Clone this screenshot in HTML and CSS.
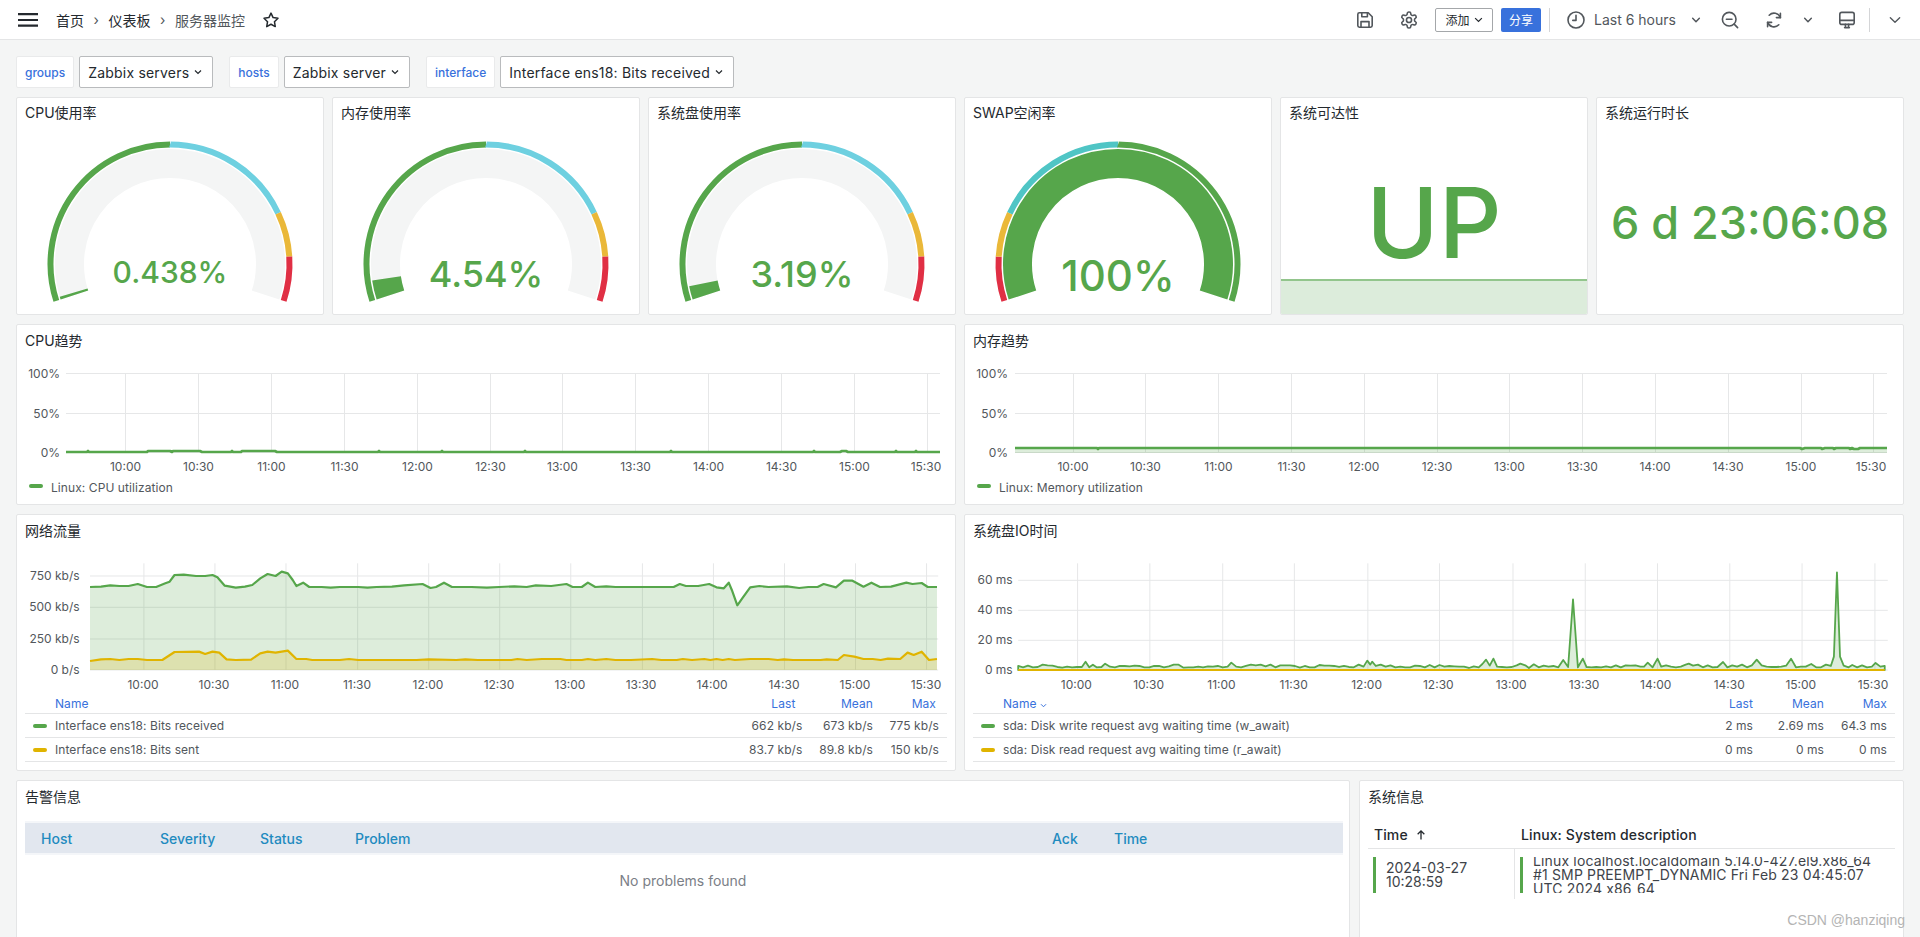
FILE: index.html
```html
<!DOCTYPE html>
<html lang="zh-CN">
<head>
<meta charset="utf-8">
<title>服务器监控</title>
<link rel="stylesheet" href="styles.css">
</head>
<body>
<header class="topbar">
  <svg class="menu" viewBox="0 0 20 14" aria-hidden="true"><path d="M0 1.2h20M0 7h20M0 12.6h20"/></svg>
  <nav class="crumbs">
    <span>首页</span><span class="sep">›</span><span>仪表板</span><span class="sep">›</span><span class="crumb-last">服务器监控</span>
  </nav>
  <svg class="ico star" viewBox="0 0 24 24"><path d="M12 2.8l2.8 6 6.5.9-4.7 4.6 1.1 6.5L12 17.7l-5.7 3.1 1.1-6.5-4.7-4.6 6.5-.9z"/></svg>
  <div class="actions">
    <svg class="ico" viewBox="2 2 20 20"><path d="M5 3h11l5 5v11a2 2 0 0 1-2 2H5a2 2 0 0 1-2-2V5a2 2 0 0 1 2-2z"/><path d="M8 3v5h7V3M7 21v-7h10v7"/></svg>
    <svg class="ico m28" viewBox="2 2 20 20"><circle cx="12" cy="12" r="3.2"/><path d="M12.22 2h-.44a2 2 0 0 0-2 2v.18a2 2 0 0 1-1 1.73l-.43.25a2 2 0 0 1-2 0l-.15-.08a2 2 0 0 0-2.73.73l-.22.38a2 2 0 0 0 .73 2.73l.15.1a2 2 0 0 1 1 1.72v.51a2 2 0 0 1-1 1.74l-.15.09a2 2 0 0 0-.73 2.73l.22.38a2 2 0 0 0 2.73.73l.15-.08a2 2 0 0 1 2 0l.43.25a2 2 0 0 1 1 1.73V20a2 2 0 0 0 2 2h.44a2 2 0 0 0 2-2v-.18a2 2 0 0 1 1-1.73l.43-.25a2 2 0 0 1 2 0l.15.08a2 2 0 0 0 2.73-.73l.22-.39a2 2 0 0 0-.73-2.73l-.15-.08a2 2 0 0 1-1-1.74v-.5a2 2 0 0 1 1-1.74l.15-.09a2 2 0 0 0 .73-2.73l-.22-.38a2 2 0 0 0-2.73-.73l-.15.08a2 2 0 0 1-2 0l-.43-.25a2 2 0 0 1-1-1.73V4a2 2 0 0 0-2-2z"/></svg>
    <button class="btn-add">添加<svg class="chev-s" viewBox="0 0 12 8"><path d="M1.5 1.5L6 6l4.5-4.5"/></svg></button>
    <button class="btn-share">分享</button>
    <span class="divider m8"></span>
    <svg class="ico m18" viewBox="2 2 20 20"><circle cx="12" cy="12" r="10"/><path d="M12 6v6.5H8"/></svg>
    <span class="range">Last 6 hours</span>
    <svg class="ico tiny m10" viewBox="0 0 24 24"><path d="M7 9.5l5 5 5-5"/></svg>
    <svg class="ico m18" viewBox="2 2 20 20"><circle cx="11" cy="11" r="8.5"/><path d="M7.5 11h7M21.5 21.5L17.2 17.2"/></svg>
    <svg class="ico m28" viewBox="2 2 20 20"><path d="M20 9A8.5 8.5 0 0 0 6 6M4 15a8.5 8.5 0 0 0 14 3"/><path d="M20 3.5V9h-5M4 20.5V15h5"/></svg>
    <svg class="ico tiny m18" viewBox="0 0 24 24"><path d="M7 9.5l5 5 5-5"/></svg>
    <svg class="ico m23" viewBox="2 2 20 20"><rect x="3" y="2.5" width="18" height="15" rx="2.5"/><path d="M3 12.5h18M9 21.5h6M10 17.5v4M14 17.5v4"/></svg>
    <span class="divider m14"></span>
    <svg class="ico m17" viewBox="0 0 24 24"><path d="M5 8.5l7 7 7-7"/></svg>
  </div>
</header>

<section class="vars">
  <span class="var-label">groups</span>
  <span class="var-select">Zabbix servers<svg class="chev-v" viewBox="0 0 8 6"><path d="M1 1.5L4 4.5l3-3"/></svg></span>
  <span class="var-label gap-l">hosts</span>
  <span class="var-select">Zabbix server<svg class="chev-v" viewBox="0 0 8 6"><path d="M1 1.5L4 4.5l3-3"/></svg></span>
  <span class="var-label gap-l">interface</span>
  <span class="var-select">Interface ens18: Bits received<svg class="chev-v" viewBox="0 0 8 6"><path d="M1 1.5L4 4.5l3-3"/></svg></span>
</section>

<main class="dash">
  <div class="row row-gauges">
    <article class="panel">
      <h2 class="title">CPU使用率</h2>
      <svg class="gauge" viewBox="0 0 306 184">
        <path class="track" pathLength="100" d="M57.42 165.05A100.5 100.5 0 1 1 248.58 165.05"/>
        <path class="val" pathLength="100" stroke-dasharray="0.7 1000" d="M57.42 165.05A100.5 100.5 0 1 1 248.58 165.05"/>
        <path class="th c-green" pathLength="100" stroke-dasharray="50 1000" d="M39.34 170.93A119.5 119.5 0 1 1 266.66 170.93"/>
        <path class="th c-blue" pathLength="100" stroke-dasharray="30 1000" stroke-dashoffset="-50" d="M39.34 170.93A119.5 119.5 0 1 1 266.66 170.93"/>
        <path class="th c-yellow" pathLength="100" stroke-dasharray="10 1000" stroke-dashoffset="-80" d="M39.34 170.93A119.5 119.5 0 1 1 266.66 170.93"/>
        <path class="th c-red" pathLength="100" stroke-dasharray="10 1000" stroke-dashoffset="-90" d="M39.34 170.93A119.5 119.5 0 1 1 266.66 170.93"/>
        <text class="gv s30" x="153" y="153">0.438%</text>
      </svg>
    </article>
    <article class="panel">
      <h2 class="title">内存使用率</h2>
      <svg class="gauge" viewBox="0 0 306 184">
        <path class="track" pathLength="100" d="M57.42 165.05A100.5 100.5 0 1 1 248.58 165.05"/>
        <path class="val" pathLength="100" stroke-dasharray="4.54 1000" d="M57.42 165.05A100.5 100.5 0 1 1 248.58 165.05"/>
        <path class="th c-green" pathLength="100" stroke-dasharray="50 1000" d="M39.34 170.93A119.5 119.5 0 1 1 266.66 170.93"/>
        <path class="th c-blue" pathLength="100" stroke-dasharray="30 1000" stroke-dashoffset="-50" d="M39.34 170.93A119.5 119.5 0 1 1 266.66 170.93"/>
        <path class="th c-yellow" pathLength="100" stroke-dasharray="10 1000" stroke-dashoffset="-80" d="M39.34 170.93A119.5 119.5 0 1 1 266.66 170.93"/>
        <path class="th c-red" pathLength="100" stroke-dasharray="10 1000" stroke-dashoffset="-90" d="M39.34 170.93A119.5 119.5 0 1 1 266.66 170.93"/>
        <text class="gv s36" x="153" y="157">4.54%</text>
      </svg>
    </article>
    <article class="panel">
      <h2 class="title">系统盘使用率</h2>
      <svg class="gauge" viewBox="0 0 306 184">
        <path class="track" pathLength="100" d="M57.42 165.05A100.5 100.5 0 1 1 248.58 165.05"/>
        <path class="val" pathLength="100" stroke-dasharray="3.19 1000" d="M57.42 165.05A100.5 100.5 0 1 1 248.58 165.05"/>
        <path class="th c-green" pathLength="100" stroke-dasharray="50 1000" d="M39.34 170.93A119.5 119.5 0 1 1 266.66 170.93"/>
        <path class="th c-blue" pathLength="100" stroke-dasharray="30 1000" stroke-dashoffset="-50" d="M39.34 170.93A119.5 119.5 0 1 1 266.66 170.93"/>
        <path class="th c-yellow" pathLength="100" stroke-dasharray="10 1000" stroke-dashoffset="-80" d="M39.34 170.93A119.5 119.5 0 1 1 266.66 170.93"/>
        <path class="th c-red" pathLength="100" stroke-dasharray="10 1000" stroke-dashoffset="-90" d="M39.34 170.93A119.5 119.5 0 1 1 266.66 170.93"/>
        <text class="gv s36" x="153" y="157">3.19%</text>
      </svg>
    </article>
    <article class="panel">
      <h2 class="title">SWAP空闲率</h2>
      <svg class="gauge" viewBox="0 0 306 184">
        <path class="val" pathLength="100" d="M57.42 165.05A100.5 100.5 0 1 1 248.58 165.05"/>
        <path class="th c-red" pathLength="100" stroke-dasharray="10 1000" d="M39.34 170.93A119.5 119.5 0 1 1 266.66 170.93"/>
        <path class="th c-yellow" pathLength="100" stroke-dasharray="10 1000" stroke-dashoffset="-10" d="M39.34 170.93A119.5 119.5 0 1 1 266.66 170.93"/>
        <path class="th c-teal" pathLength="100" stroke-dasharray="30 1000" stroke-dashoffset="-20" d="M39.34 170.93A119.5 119.5 0 1 1 266.66 170.93"/>
        <path class="th c-green" pathLength="100" stroke-dasharray="50 1000" stroke-dashoffset="-50" d="M39.34 170.93A119.5 119.5 0 1 1 266.66 170.93"/>
        <text class="gv s42" x="153" y="161">100%</text>
      </svg>
    </article>
    <article class="panel stat">
      <h2 class="title">系统可达性</h2>
      <div class="spark"></div>
      <div class="stat-body up">UP</div>
    </article>
    <article class="panel stat">
      <h2 class="title">系统运行时长</h2>
      <div class="stat-body uptime">6 d 23:06:08</div>
    </article>
  </div>

  <div class="row row-charts">
    <article class="panel">
      <h2 class="title">CPU趋势</h2>
      <svg class="plot h121" viewBox="0 0 938 121">
        <path class="gridl" d="M49 16.5H923M49 56.5H923M49 95.5H923M108.5 16V96M181.5 16V96M254.5 16V96M327.5 16V96M400.5 16V96M473.5 16V96M545.5 16V96M618.5 16V96M691.5 16V96M764.5 16V96M837.5 16V96M910.5 16V96"/>
        <path class="ln-green thick" d="M49 95H70L71 94L72 95H130L131 94H153L155 95L156 94H183L185 95H214L215 94L216 95H224L225 94H258L260 95H361L362 94L363 95H424L425 94L426 95H507L508 94L509 95H653L654 94L655 95H796L797 94L798 95H823L825 94H829L831 95H878L879 94L880 95H898L899 94L900 95H923"/>
        <text class="ay" x="43" y="20.5">100%</text><text class="ay" x="43" y="60.5">50%</text><text class="ay" x="43" y="99.5">0%</text>
        <text class="ax" x="108.5" y="114">10:00</text><text class="ax" x="181.5" y="114">10:30</text><text class="ax" x="254.5" y="114">11:00</text><text class="ax" x="327.5" y="114">11:30</text><text class="ax" x="400.5" y="114">12:00</text><text class="ax" x="473.5" y="114">12:30</text><text class="ax" x="545.5" y="114">13:00</text><text class="ax" x="618.5" y="114">13:30</text><text class="ax" x="691.5" y="114">14:00</text><text class="ax" x="764.5" y="114">14:30</text><text class="ax" x="837.5" y="114">15:00</text><text class="ax" x="909" y="114">15:30</text>
      </svg>
      <div class="legend-line"><i class="mark m-green"></i>Linux: CPU utilization</div>
    </article>
    <article class="panel">
      <h2 class="title">内存趋势</h2>
      <svg class="plot h121" viewBox="0 0 938 121">
        <path class="gridl" d="M50 16.5H922M50 56.5H922M50 95.5H922M108.5 16V96M180.5 16V96M253.5 16V96M326.5 16V96M399.5 16V96M472.5 16V96M544.5 16V96M617.5 16V96M690.5 16V96M763.5 16V96M836.5 16V96M908.5 16V96"/>
        <rect class="fill-green" x="50" y="91" width="872" height="5"/>
        <path class="ln-green thick" d="M50 91H132L133 92L134 91H835L837 92L840 91H856L857 92L860 91H868L869 92L871 91H884L885 92L887 91L889 92H893L895 91H922"/>
        <text class="ay" x="43" y="20.5">100%</text><text class="ay" x="43" y="60.5">50%</text><text class="ay" x="43" y="99.5">0%</text>
        <text class="ax" x="108" y="114">10:00</text><text class="ax" x="180.5" y="114">10:30</text><text class="ax" x="253.5" y="114">11:00</text><text class="ax" x="326.5" y="114">11:30</text><text class="ax" x="399" y="114">12:00</text><text class="ax" x="472" y="114">12:30</text><text class="ax" x="544.5" y="114">13:00</text><text class="ax" x="617.5" y="114">13:30</text><text class="ax" x="690" y="114">14:00</text><text class="ax" x="763" y="114">14:30</text><text class="ax" x="836" y="114">15:00</text><text class="ax" x="906" y="114">15:30</text>
      </svg>
      <div class="legend-line"><i class="mark m-green"></i>Linux: Memory utilization</div>
    </article>
  </div>

  <div class="row row-charts-b">
    <article class="panel">
      <h2 class="title">网络流量</h2>
      <svg class="plot h146" viewBox="0 0 938 146">
        <g transform="matrix(.6124 0 0 .3333 -17 -37)">
          <path class="gridl ns" d="M147 198H1532M147 292H1532M147 387H1532M147 480H1532M235 160V480M351 160V480M467 160V480M584 160V480M700 160V480M816 160V480M932 160V480M1049 160V480M1165 160V480M1281 160V480M1397 160V480M1513 160V480"/>
          <path class="fill-green" d="M147 231L165 230 180 226 195 228 210 228 225 222 240 231 255 231 270 220 277 215 285 195 300 194 320 198 335 198 347 195 355 202 367 227 385 233 400 230 412 225 425 205 437 192 450 198 460 185 470 190 478 210 484 228 495 218 505 231 525 231 540 233 555 231 585 231 600 233 615 231 640 230 660 226 690 222 703 234 712 231 725 218 738 231 770 231 795 233 815 231 840 229 860 231 875 226 900 228 925 222 935 231 950 231 960 218 972 231 990 229 1005 231 1100 231 1110 222 1120 228 1140 228 1158 222 1170 232 1182 235 1190 218 1195 240 1204 286 1212 265 1225 232 1240 228 1255 231 1285 229 1305 234 1320 231 1335 231 1345 222 1365 232 1378 212 1392 212 1410 230 1423 218 1437 231 1455 230 1480 218 1490 222 1505 219 1515 231 1530 231V480H147Z"/>
          <path class="fill-yellow" d="M147 453L165 448 180 447 195 450 210 447 225 447 240 450 265 450 285 426 325 425 335 432 347 425 358 428 370 448 385 450 410 449 425 430 437 425 450 428 470 422 484 447 500 447 510 450 555 450 570 447 585 450 680 450 700 448 745 450 760 448 780 450 835 450 845 447 860 450 885 447 915 447 925 450 950 450 960 447 972 450 990 447 1005 450 1030 450 1065 447 1080 450 1105 450 1115 447 1130 450 1150 447 1160 450 1170 447 1180 450 1190 447 1200 450 1225 447 1255 447 1270 450 1280 448 1295 450 1340 450 1350 448 1368 450 1378 435 1395 440 1410 447 1425 447 1438 450 1450 446 1470 447 1482 428 1492 435 1505 425 1517 450 1530 447V480H147Z"/>
          <path class="ln-green ns" d="M147 231L165 230 180 226 195 228 210 228 225 222 240 231 255 231 270 220 277 215 285 195 300 194 320 198 335 198 347 195 355 202 367 227 385 233 400 230 412 225 425 205 437 192 450 198 460 185 470 190 478 210 484 228 495 218 505 231 525 231 540 233 555 231 585 231 600 233 615 231 640 230 660 226 690 222 703 234 712 231 725 218 738 231 770 231 795 233 815 231 840 229 860 231 875 226 900 228 925 222 935 231 950 231 960 218 972 231 990 229 1005 231 1100 231 1110 222 1120 228 1140 228 1158 222 1170 232 1182 235 1190 218 1195 240 1204 286 1212 265 1225 232 1240 228 1255 231 1285 229 1305 234 1320 231 1335 231 1345 222 1365 232 1378 212 1392 212 1410 230 1423 218 1437 231 1455 230 1480 218 1490 222 1505 219 1515 231 1530 231"/>
          <path class="ln-yellow ns" d="M147 453L165 448 180 447 195 450 210 447 225 447 240 450 265 450 285 426 325 425 335 432 347 425 358 428 370 448 385 450 410 449 425 430 437 425 450 428 470 422 484 447 500 447 510 450 555 450 570 447 585 450 680 450 700 448 745 450 760 448 780 450 835 450 845 447 860 450 885 447 915 447 925 450 950 450 960 447 972 450 990 447 1005 450 1030 450 1065 447 1080 450 1105 450 1115 447 1130 450 1150 447 1160 450 1170 447 1180 450 1190 447 1200 450 1225 447 1255 447 1270 450 1280 448 1295 450 1340 450 1350 448 1368 450 1378 435 1395 440 1410 447 1425 447 1438 450 1450 446 1470 447 1482 428 1492 435 1505 425 1517 450 1530 447"/>
        </g>
        <text class="ay" x="62.6" y="33">750 kb/s</text><text class="ay" x="62.6" y="64.3">500 kb/s</text><text class="ay" x="62.6" y="96">250 kb/s</text><text class="ay" x="62.6" y="127">0 b/s</text>
        <text class="ax" x="126" y="141.7">10:00</text><text class="ax" x="197" y="141.7">10:30</text><text class="ax" x="268" y="141.7">11:00</text><text class="ax" x="340" y="141.7">11:30</text><text class="ax" x="411" y="141.7">12:00</text><text class="ax" x="482" y="141.7">12:30</text><text class="ax" x="553" y="141.7">13:00</text><text class="ax" x="624" y="141.7">13:30</text><text class="ax" x="695" y="141.7">14:00</text><text class="ax" x="767" y="141.7">14:30</text><text class="ax" x="838" y="141.7">15:00</text><text class="ax" x="909" y="141.7">15:30</text>
      </svg>
      <div class="legend net">
        <div class="lg-row lg-head"><span>Name</span><span class="num shift7">Last</span><span class="num">Mean</span><span class="num shift3">Max</span></div>
        <div class="lg-row"><span><i class="mark m-green"></i>Interface ens18: Bits received</span><span class="num">662 kb/s</span><span class="num">673 kb/s</span><span class="num">775 kb/s</span></div>
        <div class="lg-row"><span><i class="mark m-yellow"></i>Interface ens18: Bits sent</span><span class="num">83.7 kb/s</span><span class="num">89.8 kb/s</span><span class="num">150 kb/s</span></div>
      </div>
    </article>
    <article class="panel">
      <h2 class="title">系统盘IO时间</h2>
      <svg class="plot h146" viewBox="0 0 938 146">
        <g transform="matrix(.6124 0 0 .3333 -5 -37)">
          <path class="gridl ns" d="M95 211H1515M95 301H1515M95 391H1515M95 480H1515M192 160V480M310 160V480M429 160V480M546 160V480M666 160V480M783 160V480M903 160V480M1021 160V480M1139 160V480M1257 160V480M1375 160V480M1494 160V480"/>
          <path class="area-line ns" d="M95 480V468L103 472 111 467 119 472 127 471 135 464 143 466 151 467 159 471 167 473 175 470 183 472 191 471 199 471 205 455 211 472 217 464 223 472 231 471 237 461 245 470 253 472 261 468 269 468 277 469 285 467 293 468 301 472 309 472 317 468 325 468 333 472 341 469 349 464 357 464 365 473 373 472 381 472 389 470 397 472 405 469 413 470 421 468 429 472 437 470 443 458 451 470 459 472 467 468 475 464 483 466 491 464 499 469 507 464 515 472 523 466 531 466 539 466 547 468 555 473 563 468 571 472 579 472 587 465 595 467 603 467 611 468 619 471 627 468 635 471 643 472 651 464 659 470 665 452 670 464 673 455 679 468 687 464 695 470 703 466 711 472 719 470 727 472 735 472 743 467 751 468 759 472 767 465 775 472 783 465 791 470 799 468 807 469 815 470 823 470 831 474 839 469 847 472 853 462 859 449 865 467 871 446 877 470 885 471 893 472 901 471 909 466 915 461 923 466 929 474 937 463 945 472 953 467 961 470 969 468 977 472 985 450 993 471 1001 268 1009 472 1017 446 1023 471 1031 472 1039 471 1047 472 1055 469 1063 472 1071 466 1079 472 1087 466 1095 467 1103 466 1111 470 1117 470 1123 458 1131 472 1139 446 1145 470 1153 466 1161 470 1169 472 1177 470 1185 464 1190 461 1197 467 1205 464 1213 472 1221 466 1229 472 1237 471 1246 456 1253 472 1261 466 1269 470 1277 464 1285 472 1293 466 1301 449 1309 466 1317 470 1325 471 1333 471 1341 470 1349 467 1357 446 1365 472 1373 470 1381 470 1390 462 1398 472 1406 472 1414 464 1422 468 1427 440 1432 187 1437 440 1443 467 1451 472 1457 465 1465 472 1473 466 1481 472 1489 470 1495 459 1503 470 1510 468V480Z"/>
          <path class="ln-yellow ns" d="M95 480H1510"/>
        </g>
        <text class="ay" x="47.7" y="37.3">60 ms</text><text class="ay" x="47.7" y="67.3">40 ms</text><text class="ay" x="47.7" y="97.3">20 ms</text><text class="ay" x="47.7" y="127">0 ms</text>
        <text class="ax" x="111.3" y="141.7">10:00</text><text class="ax" x="183.6" y="141.7">10:30</text><text class="ax" x="256.5" y="141.7">11:00</text><text class="ax" x="328.7" y="141.7">11:30</text><text class="ax" x="401.6" y="141.7">12:00</text><text class="ax" x="473.3" y="141.7">12:30</text><text class="ax" x="546.1" y="141.7">13:00</text><text class="ax" x="619" y="141.7">13:30</text><text class="ax" x="690.7" y="141.7">14:00</text><text class="ax" x="764.2" y="141.7">14:30</text><text class="ax" x="835.8" y="141.7">15:00</text><text class="ax" x="908" y="141.7">15:30</text>
      </svg>
      <div class="legend disk">
        <div class="lg-row lg-head"><span>Name<svg class="chev-n" viewBox="0 0 8 6"><path d="M1 1.5L4 4.5l3-3"/></svg></span><span class="num">Last</span><span class="num">Mean</span><span class="num">Max</span></div>
        <div class="lg-row"><span><i class="mark m-green"></i>sda: Disk write request avg waiting time (w_await)</span><span class="num">2 ms</span><span class="num">2.69 ms</span><span class="num">64.3 ms</span></div>
        <div class="lg-row"><span><i class="mark m-yellow"></i>sda: Disk read request avg waiting time (r_await)</span><span class="num">0 ms</span><span class="num">0 ms</span><span class="num">0 ms</span></div>
      </div>
    </article>
  </div>

  <div class="row row-bottom">
    <article class="panel">
      <h2 class="title">告警信息</h2>
      <div class="prob-head"><span>Host</span><span>Severity</span><span>Status</span><span>Problem</span><span>Ack</span><span>Time</span></div>
      <p class="no-prob">No problems found</p>
    </article>
    <article class="panel">
      <h2 class="title">系统信息</h2>
      <div class="sys-head">
        <span class="sys-th">Time <svg class="arrow" viewBox="0 0 12 14"><path d="M6 12.5V2M2 6l4-4 4 4"/></svg></span>
        <span class="sys-th sys-th2">Linux: System description</span>
      </div>
      <div class="sys-row">
        <div class="sys-cell sys-c1"><div class="sys-bar">2024-03-27<br>10:28:59</div></div>
        <div class="sys-cell sys-c2"><div class="sys-bar sys-desc"><span>Linux localhost.localdomain 5.14.0-427.el9.x86_64 #1 SMP PREEMPT_DYNAMIC Fri Feb 23 04:45:07 UTC 2024 x86_64</span></div></div>
      </div>
    </article>
  </div>
</main>
<div class="watermark">CSDN @hanziqing</div>
</body>
</html>
```

FILE: styles.css
```css
* { box-sizing: border-box; }
html, body { margin: 0; height: 937px; overflow: hidden; }
body {
  position: relative;
  background: #f4f5f5;
  color: #24292e;
  font-family: Inter, "Noto Sans CJK SC", sans-serif;
  font-size: 14px;
}

/* top bar */
.topbar {
  display: flex;
  align-items: center;
  height: 40px;
  padding: 0 17px 0 18px;
  background: #fff;
  border-bottom: 1px solid #e4e5e6;
}
.menu { width: 20px; height: 14px; fill: none; stroke: #24292e; stroke-width: 2.2; flex: none; }
.crumbs { display: flex; align-items: center; margin-left: 18px; color: #24292e; }
.sep { margin: 0 9.25px; color: #52575c; width: 6px; text-align: center; }
.crumb-last { color: #52575c; }
.ico { width: 16px; height: 16px; flex: none; fill: none; stroke: #52575c; stroke-width: 2; stroke-linecap: round; stroke-linejoin: round; overflow: visible; }
.star { margin-left: 17px; width: 18px; height: 18px; stroke: #24292e; }
.tiny { stroke-width: 2.2; }
.actions { display: flex; align-items: center; margin-left: auto; }
.m8 { margin-left: 8px; }
.m10 { margin-left: 10px; }
.m14 { margin-left: 14px; }
.m17 { margin-left: 17px; }
.m18 { margin-left: 18px; }
.m23 { margin-left: 23px; }
.m28 { margin-left: 28px; }
.btn-add, .btn-share {
  display: flex;
  align-items: center;
  justify-content: center;
  height: 24px;
  padding: 0;
  font: inherit;
  font-size: 12px;
  border-radius: 2px;
}
.btn-add { width: 58px; margin-left: 18px; background: #fff; color: #24292e; border: 1px solid #a4a7aa; }
.chev-s { width: 9px; height: 6px; margin-left: 4px; fill: none; stroke: #24292e; stroke-width: 1.6; }
.btn-share { width: 40px; margin-left: 8px; background: #3871dc; color: #fff; border: 0; }
.divider { width: 1px; height: 24px; background: #d4d5d7; flex: none; }
.range { width: 84px; margin-left: 10px; color: #52575c; white-space: nowrap; font-size: 14px; }

/* variables */
.vars { display: flex; align-items: stretch; height: 32px; margin: 16px 0 9px; padding-left: 16px; }
.var-label {
  display: flex;
  align-items: center;
  padding: 0 8px;
  background: #fff;
  border: 1px solid #e9eaeb;
  border-radius: 2px;
  color: #3871dc;
  font-size: 12px;
  font-weight: 500;
}
.gap-l { margin-left: 16px; }
.var-select {
  display: flex;
  align-items: center;
  margin-left: 5px;
  padding: 0 10px 0 8px;
  background: #fff;
  border: 1px solid #b9bbbd;
  border-radius: 2px;
  color: #24292e;
  white-space: nowrap;
  letter-spacing: .2px;
}
.chev-v { width: 8px; height: 6px; margin-left: 5px; fill: none; stroke: #24292e; stroke-width: 1.2; }

/* dashboard */
.dash { display: flex; flex-direction: column; gap: 9px; padding: 0 16px; }
.row { display: grid; gap: 8px; }
.row-gauges { grid-template-columns: repeat(6, 1fr); height: 218px; }
.row-charts { grid-template-columns: 1fr 1fr; height: 181px; }
.row-charts-b { grid-template-columns: 1fr 1fr; height: 257px; }
.row-bottom { grid-template-columns: 1334px 545px; gap: 9px; height: 200px; }
.panel {
  position: relative;
  min-width: 0;
  background: #fff;
  border: 1px solid #e4e5e6;
  border-radius: 2px;
  overflow: hidden;
}
.title { margin: 0; padding: 0 8px; height: 32px; font-size: 14px; font-weight: 400; line-height: 32px; color: #24292e; }
.row-gauges .title { line-height: 30px; }

/* gauges */
.gauge { display: block; width: 306px; height: 184px; }
.track, .val, .th { fill: none; }
.track { stroke: #f4f5f5; stroke-width: 29; }
.val { stroke: #56a64b; stroke-width: 29; }
.th { stroke-width: 6; }
.c-green { stroke: #56a64b; }
.c-blue { stroke: #6ed0e0; }
.c-yellow { stroke: #eab839; }
.c-red { stroke: #e02f44; }
.c-teal { stroke: #4fc5c5; }
.gv { fill: #56a64b; text-anchor: middle; font-family: Inter, sans-serif; font-weight: 450; }
.s30 { font-size: 30px; }
.s36 { font-size: 36px; }
.s42 { font-size: 42px; }

/* stats */
.stat-body {
  position: relative;
  display: flex;
  align-items: center;
  justify-content: center;
  height: 184px;
  color: #56a64b;
  font-weight: 500;
  white-space: nowrap;
}
.up { font-size: 98px; }
.uptime { font-size: 45px; }
.spark {
  position: absolute;
  left: 0;
  right: 0;
  bottom: 0;
  height: 35px;
  background: #dcecdb;
  border-top: 2px solid #92c58c;
}

/* charts */
.plot { display: block; width: 938px; }
.h121 { height: 121px; }
.h146 { height: 146px; }
.gridl { fill: none; stroke: #e6e7e8; stroke-width: 1; }
.ns { vector-effect: non-scaling-stroke; }
.ln-green, .ln-yellow { fill: none; stroke-width: 2.2; stroke-linejoin: round; }
.thick { stroke-width: 2.6; }
.ln-green { stroke: #56a64b; }
.ln-yellow { stroke: #e0b400; }
.area-line { fill: #56a64b; fill-opacity: .2; stroke: #56a64b; stroke-width: 1.8; stroke-linejoin: round; }
.fill-green { fill: #56a64b; fill-opacity: .2; }
.fill-yellow { fill: #e0b400; fill-opacity: .2; }
.ax, .ay { font-family: Inter, sans-serif; font-size: 12px; fill: #52575c; }
.ax { text-anchor: middle; }
.ay { text-anchor: end; }

/* legend */
.legend-line { display: flex; align-items: center; height: 18px; padding-left: 12px; font-size: 12px; letter-spacing: .08px; color: #52575c; }
.mark { display: inline-block; width: 14px; height: 4px; margin-right: 8px; border-radius: 2px; vertical-align: middle; position: relative; top: -1px; }
.m-green { background: #56a64b; }
.m-yellow { background: #e0b400; }
.legend { margin: 0 8px; font-size: 12px; letter-spacing: .08px; color: #52575c; }
.lg-row { display: grid; align-items: center; height: 24px; padding: 0 8px; border-bottom: 1px solid #e4e5e6; }
.lg-head { height: 21px; color: #3871dc; padding-left: 30px; }
.net .lg-row { grid-template-columns: 1fr 90px 70.6px 66px; }
.disk .lg-row { grid-template-columns: 1fr 90px 71px 63px; }
.num { text-align: right; white-space: nowrap; }
.shift7 { padding-right: 7px; }
.shift3 { padding-right: 3px; }
.chev-n { width: 7px; height: 5px; margin-left: 3px; fill: none; stroke: #3871dc; stroke-width: 1.2; }

/* problems */
.prob-head {
  display: grid;
  grid-template-columns: 119px 100px 95px 697px 62px 1fr;
  align-items: center;
  height: 34px;
  margin: 8px 6px 0 8px;
  padding-left: 16px;
  background: #e2e7ef;
  border: solid #f4f6f9;
  border-width: 2px 0;
  color: #1f8bbf;
  font-weight: 500;
}
.no-prob { margin: 17px 0 0; text-align: center; color: #7b8087; line-height: 17px; }

/* system info */
.sys-head {
  display: grid;
  grid-template-columns: 147px 1fr;
  align-items: center;
  height: 28px;
  margin: 8px 8px 0;
  border-bottom: 1px solid #e4e5e6;
  font-weight: 500;
  letter-spacing: .1px;
}
.sys-th { padding-left: 6px; display: flex; align-items: center; }
.sys-th2 { padding-left: 6px; }
.arrow { width: 10px; height: 12px; margin-left: 8px; fill: none; stroke: #24292e; stroke-width: 1.6; }
.sys-row { display: grid; grid-template-columns: 147px 1fr; height: 50px; margin: 0 8px; }
.sys-cell { padding: 8px 0 0 5px; }
.sys-c1 { border-right: 1px solid #e4e5e6; }
.sys-bar {
  display: flex;
  flex-direction: column;
  justify-content: center;
  height: 36px;
  padding-left: 10px;
  border-left: 3px solid #56a64b;
  line-height: 14px;
  color: #3e4349;
  overflow: hidden;
}
.sys-c1 .sys-bar { display: block; padding-top: 4px; }
.sys-desc { width: 363px; letter-spacing: .15px; }
.sys-desc span { display: block; flex: none; }

.watermark {
  position: absolute;
  right: 15px;
  top: 911px;
  color: #b4b4b4;
  font-family: "Liberation Sans", sans-serif;
  font-size: 14px;
  line-height: 18px;
}
```
